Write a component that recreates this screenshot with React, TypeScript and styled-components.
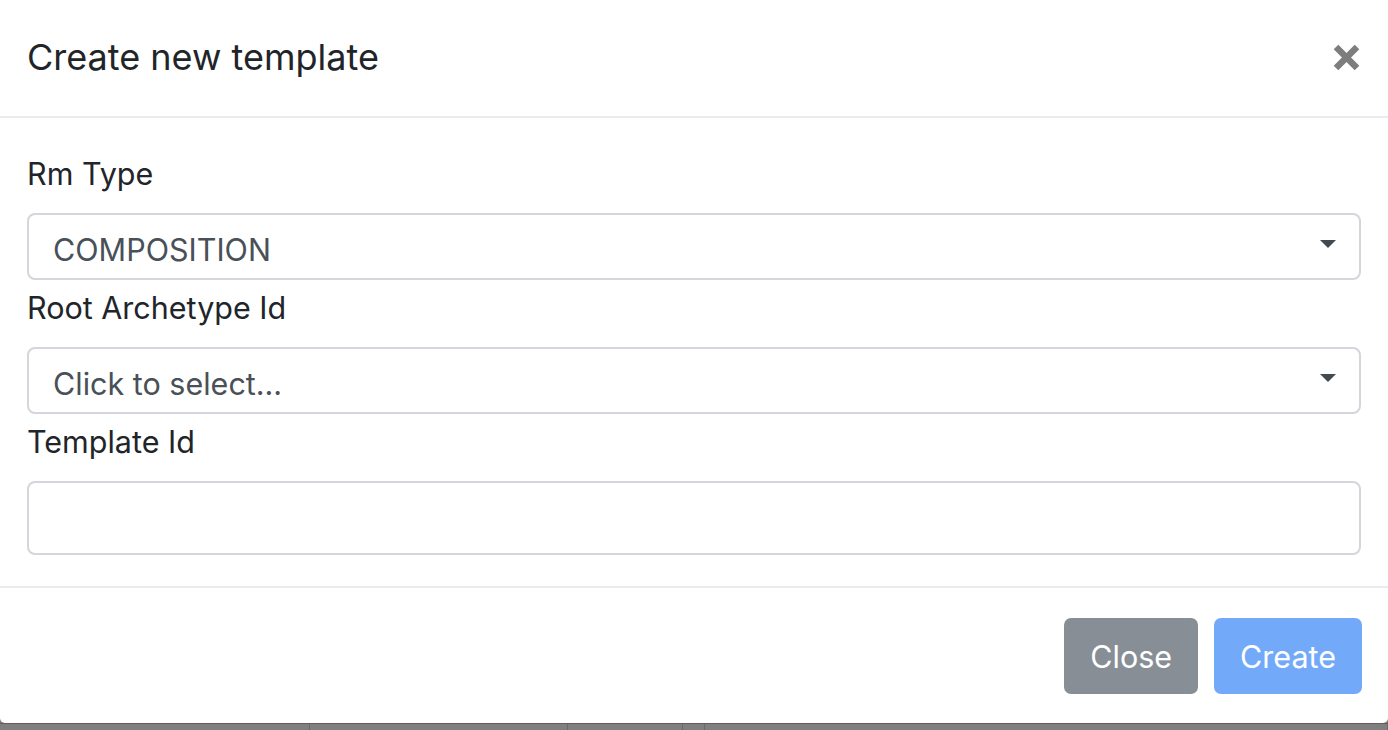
import React from "react";
import styled, { createGlobalStyle } from "styled-components";

const Global = createGlobalStyle`
  html, body { margin: 0; padding: 0; background: #7f7f7f; }
  body { font-family: Inter, "Open Sans", "Liberation Sans", sans-serif; }
  * { box-sizing: border-box; }
`;

const Page = styled.div`
  width: 1388px;
  height: 730px;
  display: flex;
  flex-direction: column;
  overflow: hidden;
  background: #7f7f7f;
`;

const Modal = styled.div`
  flex: none;
  background: #fff;
  border-radius: 0 0 5px 5px;
  display: flex;
  flex-direction: column;
`;

const Header = styled.div`
  height: 118px;
  padding: 0 28px 0 27px;
  display: flex;
  align-items: center;
  justify-content: space-between;
  border-bottom: 2px solid #e9ecef;
`;

const Title = styled.h5`
  margin: 0;
  font-size: 36px;
  font-weight: 400;
  color: #212529;
  line-height: 1.2;
`;

const CloseX = styled.button`
  border: 0;
  background: none;
  padding: 0;
  width: 28px;
  height: 28px;
  display: flex;
  align-items: center;
  justify-content: center;
  margin-top: -1px;
  cursor: pointer;
`;

const Body = styled.div`
  padding: 34px 27px 31px 27px;
  display: flex;
  flex-direction: column;
`;

const Field = styled.div<{ $last?: boolean }>`
  display: flex;
  flex-direction: column;
  margin-bottom: ${(p) => (p.$last ? "0" : "6px")};
`;

const Label = styled.label`
  display: block;
  font-size: 30.5px;
  line-height: 43px;
  color: #212529;
  margin-bottom: 18px;
`;

const Select = styled.div`
  height: 67px;
  border: 2px solid #d3d6da;
  border-radius: 8px;
  padding: 0 23px 0 24px;
  display: flex;
  align-items: center;
  justify-content: space-between;
  font-size: 30.5px;
  color: #495057;
  background: #fff;
`;

const SelectText = styled.span`
  padding-top: 6px;
`;

const Caret = styled.svg`
  margin-top: -6px;
  flex: none;
`;

const Input = styled.input`
  height: 74px;
  border: 2px solid #d3d6da;
  border-radius: 8px;
  padding: 0 24px;
  font-size: 30.5px;
  font-family: inherit;
  color: #495057;
  outline: none;
  width: 100%;
`;

const Footer = styled.div`
  border-top: 2px solid #e9ecef;
  padding: 30px 26px 29px 27px;
  display: flex;
  justify-content: flex-end;
  gap: 16px;
`;

const Button = styled.button<{ $variant: "secondary" | "primary" }>`
  height: 76px;
  padding: 0 26px;
  border: 0;
  border-radius: 7px;
  font-family: inherit;
  font-size: 30.5px;
  color: #fff;
  background: ${(p) => (p.$variant === "primary" ? "#72aaf9" : "#878e96")};
  cursor: ${(p) => (p.$variant === "primary" ? "default" : "pointer")};
`;

const Backdrop = styled.div`
  flex: 1;
  display: flex;
  border-top: 1px solid #5f5f5f;
  background: #7f7f7f;
`;

const Col = styled.div<{ $w?: number }>`
  ${(p) => (p.$w ? `width: ${p.$w}px; flex: none;` : "flex: 1;")}
  border-right: 1px solid #6a6a6a;
`;

const CaretIcon = () => (
  <Caret width="16" height="8" viewBox="0 0 16 8">
    <polygon points="0,0 16,0 8,8" fill="#454a4f" />
  </Caret>
);

export default function App() {
  return (
    <>
      <Global />
      <Page>
        <Modal>
          <Header>
            <Title>Create new template</Title>
            <CloseX aria-label="Close">
              <svg width="27" height="27" viewBox="0 0 27 27">
                <line x1="3" y1="3" x2="24" y2="24" stroke="#7d7d7d" strokeWidth="6.5" />
                <line x1="24" y1="3" x2="3" y2="24" stroke="#7d7d7d" strokeWidth="6.5" />
              </svg>
            </CloseX>
          </Header>
          <Body>
            <Field>
              <Label>Rm Type</Label>
              <Select>
                <SelectText>COMPOSITION</SelectText>
                <CaretIcon />
              </Select>
            </Field>
            <Field>
              <Label>Root Archetype Id</Label>
              <Select>
                <SelectText>Click to select...</SelectText>
                <CaretIcon />
              </Select>
            </Field>
            <Field $last>
              <Label>Template Id</Label>
              <Input type="text" />
            </Field>
          </Body>
          <Footer>
            <Button $variant="secondary">Close</Button>
            <Button $variant="primary" disabled>Create</Button>
          </Footer>
        </Modal>
        <Backdrop>
          <Col $w={310} />
          <Col $w={258} />
          <Col $w={115} />
          <Col $w={22} />
          <Col />
        </Backdrop>
      </Page>
    </>
  );
}
